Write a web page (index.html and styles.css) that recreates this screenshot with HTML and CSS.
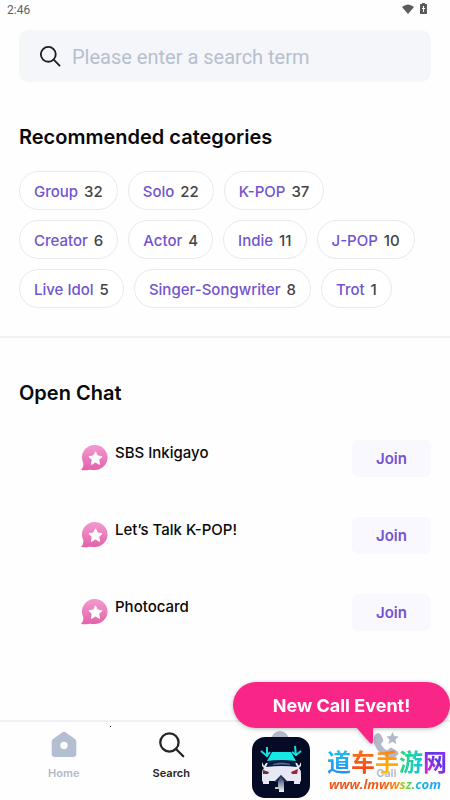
FILE: index.html
```html
<!DOCTYPE html>
<html lang="en">
<head>
<meta charset="utf-8">
<meta name="viewport" content="width=device-width, initial-scale=1">
<title>Search</title>
<link rel="stylesheet" href="styles.css">
</head>
<body>
<svg class="defs" width="0" height="0" aria-hidden="true">
  <defs>
    <linearGradient id="pink" x1="0" y1="0" x2="0" y2="1">
      <stop offset="0" stop-color="#f49ad0"/>
      <stop offset="1" stop-color="#e262a9"/>
    </linearGradient>
    <symbol id="chat" viewBox="0 0 28 28">
      <path fill="url(#pink)" d="M15 1a12.500 12.500 0 1 1 0 25c-3 0-5-.8-7 0-2 .4-5 .4-7-.3 2-2 2.500-4 2.300-6.500A12.500 12.500 0 0 1 15 1z"/>
      <path fill="#fff" stroke="#fff" stroke-linejoin="round" d="M15.500 7.800l2 4.200 4.600.6-3.400 3.200.9 4.600-4.100-2.300-4.100 2.300.9-4.600-3.400-3.200 4.600-.6z"/>
    </symbol>
    <symbol id="magnifier" viewBox="0 0 26 26">
      <g fill="none" stroke="currentColor" stroke-width="2.200" stroke-linecap="round"><circle cx="11" cy="11" r="8.800"/><path d="M17.300 17.300l7 7"/></g>
    </symbol>
  </defs>
</svg>
<div class="app">
  <header class="status">
    <span>2:46</span>
    <span class="status-icons">
      <svg width="12" height="12" viewBox="0 0 12 12"><path fill="#5c5c5c" d="M0 4Q6-1 12 4L6 11z"/></svg>
      <svg width="7" height="12" viewBox="0 0 7 12"><path fill="#5c5c5c" d="M2 0h3v1h2v10H0V1h2z"/><path stroke="#fff" d="M3.500 3v6M2 5.500h3"/></svg>
    </span>
  </header>
  <main>
    <label class="search">
      <svg width="22" height="22" aria-hidden="true"><use href="#magnifier"/></svg>
      <input type="search" aria-label="Search" placeholder="Please enter a search term">
    </label>
    <section class="categories">
      <h2>Recommended categories</h2>
      <div class="tags">
        <button>Group <span>32</span></button>
        <button>Solo <span>22</span></button>
        <button>K-POP <span>37</span></button>
        <button>Creator <span>6</span></button>
        <button>Actor <span>4</span></button>
        <button>Indie <span>11</span></button>
        <button>J-POP <span>10</span></button>
        <button>Live Idol <span>5</span></button>
        <button>Singer-Songwriter <span>8</span></button>
        <button>Trot <span>1</span></button>
      </div>
    </section>
    <section class="chats">
      <h2>Open Chat</h2>
      <ul>
        <li><svg width="28" height="28" aria-hidden="true"><use href="#chat"/></svg><h3>SBS Inkigayo</h3><button>Join</button></li>
        <li><svg width="28" height="28" aria-hidden="true"><use href="#chat"/></svg><h3>Let’s Talk K-POP!</h3><button>Join</button></li>
        <li><svg width="28" height="28" aria-hidden="true"><use href="#chat"/></svg><h3>Photocard</h3><button>Join</button></li>
      </ul>
    </section>
  </main>
  <nav class="tabs">
    <a href="#home">
      <svg width="28" height="28" viewBox="0 0 28 28"><path fill="#b3bed0" d="M12.600 1.200q1.400-1 2.800 0l9.600 6.700q1.300 1 1.300 2.500V23q0 3-3 3H4.700q-3 0-3-3V10.400q0-1.500 1.300-2.500z"/><circle cx="14" cy="14.500" r="3.700" fill="#fff"/></svg>
      <span>Home</span>
    </a>
    <a href="#search" class="active" aria-current="page">
      <svg width="28" height="28" viewBox="-1 -1 28 28"><use href="#magnifier" width="27" height="27" x="0" y="-1"/></svg>
      <span>Search</span>
    </a>
    <a href="#profile" aria-label="Profile">
      <svg width="28" height="28" viewBox="0 0 28 28"><circle cx="15" cy="9" r="9" fill="#b3b9c9"/></svg>
    </a>
    <a href="#call">
      <svg width="28" height="28" viewBox="0 0 28 28"><path fill="#b3b9c9" d="M3 4q3-4 6 0l2 4q1 2-1.500 4-1 1 .5 3 2 3 4.500 4 1.500.5 2.500-1 1.500-2 4-.5l4 2.500q3 2 0 4.500-4 4-10 1.500Q7 23 3 15 0 8 3 4z"/><path fill="#b3b9c9" d="M20.500 1l1.800 4 4.400.5-3.300 3 .9 4.400-3.800-2.200-3.900 2.200.9-4.400-3.200-3 4.300-.5z"/></svg>
      <span>Call</span>
    </a>
    <i class="speck"></i>
    <div class="event">New Call Event!
      <svg width="17" height="17" viewBox="0 0 17 17" aria-hidden="true"><path fill="#f92688" d="M0 0h17v14q0 4-3 2z"/></svg>
    </div>
    <div class="brand">
      <svg width="58" height="61" viewBox="0 0 58 61" aria-hidden="true">
        <defs><linearGradient id="road" x1="0" y1="0" x2="0" y2="1"><stop offset="0" stop-color="#17264b"/><stop offset="1" stop-color="#f4f6fc"/></linearGradient></defs>
        <rect width="58" height="61" rx="13" fill="#050b24"/>
        <path fill="#e6e9f5" d="M14 26q15-3 31 0l2 3 2-4v4l-2 2q2 2 2 6v7l-1 1v2h-6v-3H17v3h-6v-2l-1-1v-7q0-4 2-6l-2-2v-4l2 4z"/>
        <path fill="#0b1c40" d="M17 23h25l3 7q-15-2-31 0z"/>
        <path fill="#4f6c9c" d="M21 27q9-3 17 0v1q-8-1-17 0z"/>
        <path fill="#16e8e4" d="M20 15h19l5 9q-15-2-29 0z"/>
        <path fill="none" stroke="#19dcdf" stroke-width="2" d="M15 10v10M15 19l-6-5M15 19l3-4M43 9l1 10M44 18l-4-3M44 18l5-4"/>
        <path fill="#69333d" d="M11 33l6 2-1 2h-5z"/>
        <path fill="#9e2430" d="M46 32l-7 3 1 2h5z"/>
        <path fill="#17264b" d="M22 45l7-7 7 7z"/>
        <path fill="url(#road)" d="M29 38l3 7v10h-5v-3h-4v-2h3v-5z"/>
      </svg>
      <div class="brand-text">
        <strong><span class="c1">道</span><span class="c2">车</span><span class="c3">手</span><span class="c4">游</span><span class="c5">网</span></strong>
        <em>www.lmwwsz.com</em>
      </div>
    </div>
  </nav>
</div>
</body>
</html>
```
FILE: styles.css
```css
* { box-sizing: border-box; }
body { margin: 0; background: #fefefe; color: #090909; font-family: Inter, sans-serif; }
.defs { position: absolute; }
.app { display: flex; flex-direction: column; min-height: 100vh; overflow: hidden; }
button { border: 0; font: inherit; cursor: pointer; }
.status { display: flex; justify-content: space-between; height: 30px; padding: 3px 23px 0 7px; font: 400 12px/14px Roboto, sans-serif; color: #616161; }
.status-icons { display: flex; gap: 6px; }
main { flex: 1; }
.search { display: flex; align-items: center; gap: 11px; height: 52px; margin: 0 19px; padding: 0 20px; border-radius: 10px; background: #f4f6f9; color: #1c1f22; }
.search input { flex: 1; min-width: 0; border: 0; padding: 2px 0 0; outline: 0; background: transparent; font: 20px/28px Roboto, sans-serif; }
.search input::placeholder { color: #b7bfce; }
h2 { margin: 0; font-size: 20px; line-height: 24px; font-weight: 600; }
.categories { padding: 43px 19px 28px; border-bottom: 2px solid #f0f1f3; }
.tags { display: flex; flex-wrap: wrap; gap: 10px; margin-top: 22px; }
.tags button { display: flex; gap: 6px; height: 39px; align-items: center; padding: 1px 14px 0; border: 1px solid #e6e9ee; border-radius: 20px; background: #fff; color: #7154cf; font-size: 15px; font-weight: 500; }
.tags span { color: #444; }
.chats { padding: 43px 19px 20px; }
.chats ul { list-style: none; margin: 35px 0 0; padding: 0; display: grid; gap: 40px; }
.chats li { display: flex; align-items: flex-start; padding-left: 61px; }
.chats li svg { margin-top: 4px; }
.chats h3 { flex: 1; margin: 2px 0 0 7px; font-size: 15px; line-height: 22px; font-weight: 500; }
.chats button { width: 79px; height: 37px; border-radius: 7px; background: #f9f8fe; color: #7154cf; font-size: 15px; font-weight: 600; }
.tabs { position: relative; display: grid; grid-template-columns: repeat(4, 1fr); height: 80px; padding: 9px 10px 0; border-top: 2px solid #f0f1f3; }
.tabs a { display: flex; flex-direction: column; align-items: center; gap: 6px; color: #b3b9c9; font-size: 11px; line-height: 16px; font-weight: 600; text-decoration: none; }
.tabs .active { color: #222426; }
.speck { position: absolute; left: 110px; top: 4px; width: 1px; height: 1px; background: #333; }
.event { position: absolute; right: 0; bottom: 72px; width: 217px; height: 46px; border-radius: 23px; background: #f92688; color: #fff; text-align: center; font-size: 18px; line-height: 47px; font-weight: 700; filter: drop-shadow(0 1px 2px #0004); }
.event svg { position: absolute; right: 77px; top: 45px; }
.brand { position: absolute; right: 3px; bottom: 2px; display: flex; gap: 18px; }
.brand > svg { margin-right: -1px; margin-left: -1px; }
.brand-text { display: flex; flex-direction: column; padding-top: 10px; }
.brand strong { display: flex; font: 700 24px/28px "Noto Sans CJK SC", sans-serif; }
.brand strong span, .brand em { color: transparent; background-clip: text; -webkit-background-clip: text; }
.c1 { background-image: linear-gradient(#1cc5ec, #278cf5); }
.c2 { background-image: linear-gradient(#ff7818, #f13f1b); }
.c3 { background-image: linear-gradient(#ff7a16, #ffc400); }
.c4 { background-image: linear-gradient(100deg, #2bdc68, #14c3e3); }
.c5 { background-image: linear-gradient(45deg, #f423c4, #5a35ef 60%, #b52aef); }
.brand em { padding-left: 2px; font: italic 700 13px/18px "Open Sans", sans-serif; background-image: linear-gradient(90deg, #ef5518 0 45%, #ff8b0b 58%, #83df25 66%, #10b6ec 76%, #269cf5); }
```
